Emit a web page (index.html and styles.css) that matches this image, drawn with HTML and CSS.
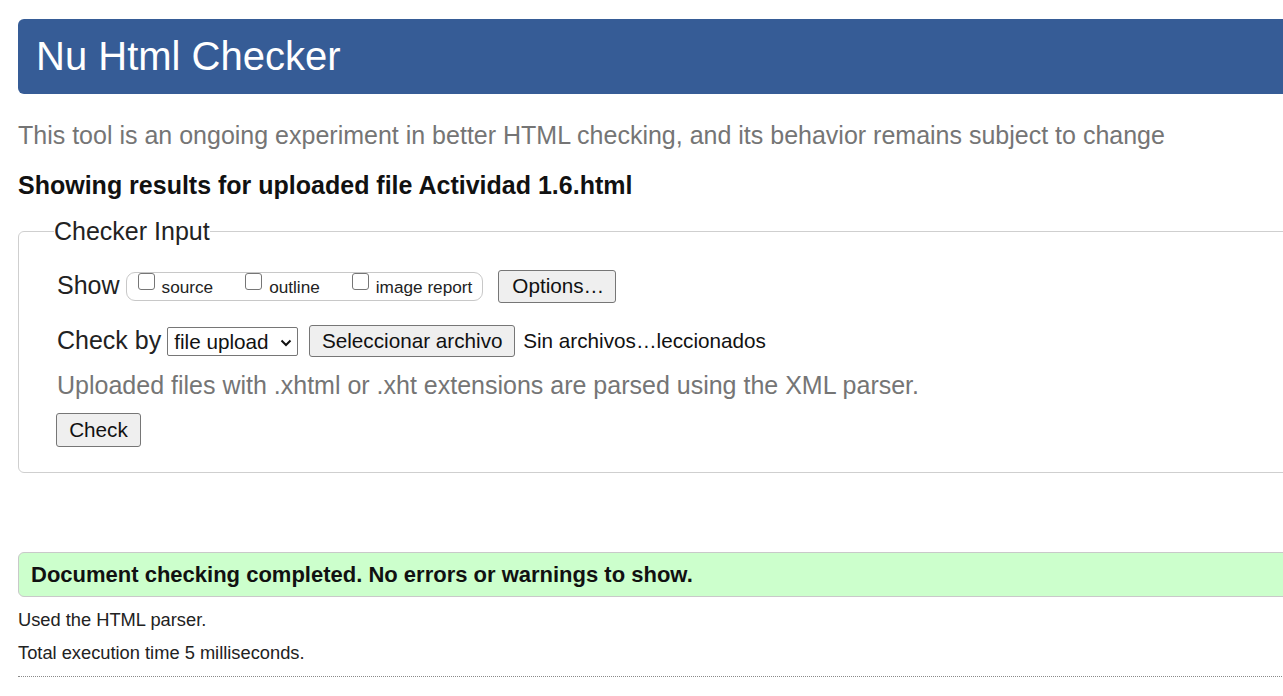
FILE: index.html
```html
<!DOCTYPE html>
<html lang="en">
<head>
<meta charset="utf-8">
<title>Nu Html Checker</title>
<link rel="stylesheet" href="styles.css">
</head>
<body>
<div class="page">
  <h1 class="title">Nu Html Checker</h1>
  <p class="intro">This tool is an ongoing experiment in better HTML checking, and its behavior remains subject to change</p>
  <p class="showing">Showing results for uploaded file Actividad 1.6.html</p>

  <form class="input-form">
    <fieldset class="checker">
      <legend class="legend">Checker Input</legend>

      <div class="row row-show">
        <span class="row-label">Show</span>
        <span class="checks">
          <label class="check-item"><input type="checkbox" class="cb"><span class="cb-text">source</span></label>
          <label class="check-item"><input type="checkbox" class="cb"><span class="cb-text">outline</span></label>
          <label class="check-item"><input type="checkbox" class="cb"><span class="cb-text">image report</span></label>
        </span>
        <button type="button" class="btn btn-options">Options…</button>
      </div>

      <div class="row row-by">
        <span class="row-label">Check by</span>
        <span class="select-wrap">
          <select class="select"><option>file upload</option></select>
          <svg class="chev" width="12" height="8" viewBox="0 0 12 8"><path d="M1.5 1.5 L6 6 L10.5 1.5" fill="none" stroke="#111" stroke-width="2"/></svg>
        </span>
        <span class="file">
          <button type="button" class="btn btn-file">Seleccionar archivo</button>
          <span class="file-name">Sin archivos…leccionados</span>
        </span>
      </div>

      <p class="hint">Uploaded files with .xhtml or .xht extensions are parsed using the XML parser.</p>

      <button type="button" class="btn btn-check">Check</button>
    </fieldset>
  </form>

  <div class="success">Document checking completed. No errors or warnings to show.</div>
  <p class="meta meta-first">Used the HTML parser.</p>
  <p class="meta">Total execution time 5 milliseconds.</p>
  <hr class="dotted">
</div>
</body>
</html>
```

FILE: styles.css
```css
html, body {
  margin: 0;
  padding: 0;
  overflow: hidden;
  background: #ffffff;
}

body {
  font-family: "Liberation Sans", Arial, sans-serif;
  color: #222222;
}

.page {
  width: 1310px;
  padding: 19px 0 0 18px;
}

.title {
  margin: 0;
  height: 75px;
  line-height: 75px;
  padding-left: 18px;
  background: #365c96;
  color: #ffffff;
  font-size: 40px;
  font-weight: normal;
  border-radius: 6px 0 0 6px;
}

.intro {
  margin: 26px 0 0;
  font-size: 25px;
  line-height: 30px;
  color: #757575;
}

.showing {
  margin: 20px 0 0;
  font-size: 25px;
  line-height: 30px;
  font-weight: bold;
  color: #111111;
}

.input-form {
  margin: 16px 0 0;
}

.checker {
  margin: 0;
  padding: 0 0 25px 38px;
  border: 1px solid #cfcfcf;
  border-radius: 6px;
  min-width: 0;
}

.legend {
  padding: 0;
  margin-left: -3px;
  font-size: 25px;
  line-height: 30px;
  color: #222222;
}

.row {
  display: flex;
  align-items: center;
  height: 34px;
}

.row-show {
  margin-top: 23px;
}

.row-by {
  margin-top: 21px;
}

.row-label {
  font-size: 25px;
  line-height: 30px;
  color: #222222;
  margin-top: -3px;
}

.checks {
  display: inline-flex;
  align-items: flex-start;
  gap: 32px;
  height: 27px;
  margin-left: 6px;
  padding: 0 10px 0 11px;
  border: 1px solid #c8c8c8;
  border-radius: 9px;
}

.check-item {
  display: inline-flex;
  align-items: flex-start;
}

.cb {
  appearance: none;
  -webkit-appearance: none;
  width: 17px;
  height: 17px;
  margin: 0;
  border: 1px solid #767676;
  border-radius: 3px;
  background: #ffffff;
}

.cb-text {
  margin-left: 7px;
  margin-top: 4px;
  font-size: 17.2px;
  line-height: 20px;
  color: #222222;
}

.btn {
  font-family: "Liberation Sans", Arial, sans-serif;
  font-size: 20.7px;
  color: #111111;
  background: #efefef;
  border: 1px solid #767676;
  border-radius: 3px;
  padding: 0 13px;
  height: 33px;
  line-height: 30px;
}

.btn-options {
  margin-left: 15px;
  width: 118px;
}

.select-wrap {
  position: relative;
  display: inline-block;
  margin-left: 6px;
  height: 29px;
}

.select {
  appearance: none;
  -webkit-appearance: none;
  font-family: "Liberation Sans", Arial, sans-serif;
  font-size: 20.7px;
  color: #111111;
  width: 131px;
  height: 29px;
  padding: 0 0 0 6px;
  border: 1px solid #767676;
  border-radius: 2px;
  background: #ffffff;
}

.chev {
  position: absolute;
  left: 113px;
  top: 12px;
}

.file {
  display: inline-flex;
  align-items: center;
  margin-left: 11px;
}

.btn-file {
  width: 206px;
  height: 32px;
  padding: 0;
}

.file-name {
  margin-left: 8px;
  font-size: 20.7px;
  color: #111111;
}

.hint {
  margin: 12px 0 0;
  font-size: 25px;
  line-height: 30px;
  color: #757575;
}

.btn-check {
  display: block;
  margin: 13px 0 0 -1px;
  width: 85px;
  height: 34px;
  padding: 0;
}

.success {
  margin-top: 79px;
  height: 43px;
  line-height: 43px;
  padding-left: 12px;
  background: #ccffcc;
  border: 1px solid #c9c9c9;
  border-radius: 6px 0 0 6px;
  font-size: 22px;
  font-weight: bold;
  color: #111111;
}

.meta {
  margin: 9px 0 0;
  font-size: 18.3px;
  line-height: 24px;
  color: #222222;
}

.meta-first {
  margin-top: 11px;
}

.dotted {
  margin: 11px 0 0;
  border: 0;
  border-top: 1px dotted #8a8a8a;
  height: 0;
}
```
